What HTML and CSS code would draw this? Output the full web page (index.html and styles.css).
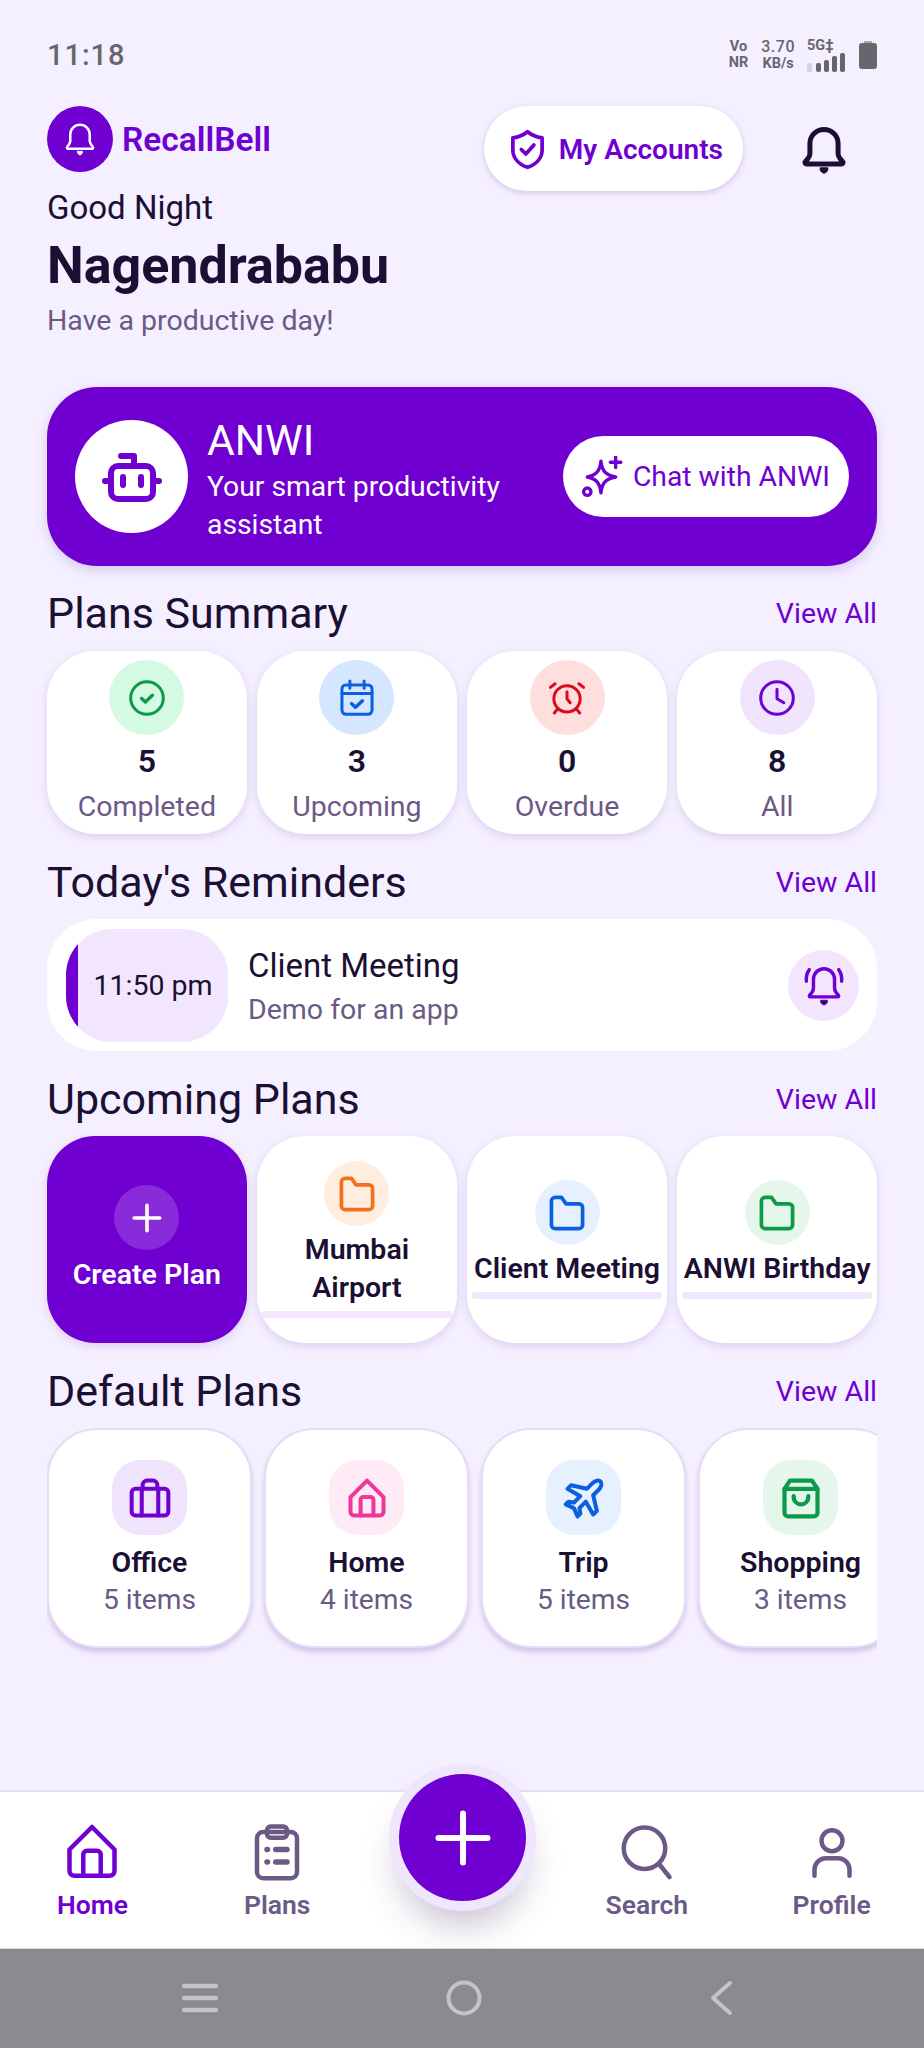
FILE: index.html
```html
<!DOCTYPE html>
<html lang="en">
<head>
    <meta charset="UTF-8">
    <meta name="viewport" content="width=device-width, initial-scale=1.0">
    <title>RecallBell</title>
    <link rel="stylesheet" href="styles.css">
</head>
<body>
    <svg class="sprites" width="0" height="0">
        <symbol id="i-folder" viewBox="0 0 24 24"><path d="M3.500 5.500a2 2 0 0 1 2-2h3.500l2.500 3.500h7a2 2 0 0 1 2 2v9.500a2 2 0 0 1-2 2h-13a2 2 0 0 1-2-2z"/></symbol>
        <symbol id="i-bell" viewBox="0 0 24 24"><path d="M12 2.500a6.500 6.500 0 0 0-6.500 6.500v4.500c0 1.500-.9 2.600-2 3.700-.5.500-.2 1.300.5 1.300h16c.7 0 1-.8.5-1.300-1.100-1.100-2-2.200-2-3.700V9A6.500 6.500 0 0 0 12 2.500z"/><path class="fill" d="M10.300 20.300h3.400c.2 1-.7 2-1.700 2.400-1-.4-1.900-1.400-1.700-2.400z"/></symbol>
    </svg>

    <div class="status">
        <span class="clock">11:18</span>
        <div class="status-right">
            <span class="tiny">Vo<br>NR</span>
            <span class="tiny speed"><b>3.70</b><br>KB/s</span>
            <div class="net">
                <span class="tiny">5G&#8225;</span>
                <div class="bars"><i class="bar-arrow"></i><i class="b1"></i><i class="b2"></i><i class="b3"></i><i class="b4"></i></div>
            </div>
            <div class="battery"><i class="battery-cap"></i><i class="battery-body"></i></div>
        </div>
    </div>

    <div class="main">
        <div class="topbar">
            <div class="brand">
                <span class="brand-logo"><svg class="ic" viewBox="0 0 24 24" width="36" height="36" stroke="#fff" stroke-width="1.700"><use href="#i-bell"/></svg></span>
                <span class="brand-name">RecallBell</span>
            </div>
            <div class="accounts">
                <svg class="ic" viewBox="0 0 24 24" width="45" height="45" stroke="#6f00d1" stroke-width="2"><path d="M12 2.500c2.200 1.800 4.700 2.900 7.800 3.300v6.400c0 4.400-3.200 7.700-7.800 9.300-4.600-1.600-7.800-4.900-7.800-9.300V5.800c3.100-.4 5.600-1.500 7.800-3.300z"/><path d="M8.700 12l2.400 2.400 4.300-4.800"/></svg>
                <span>My Accounts</span>
            </div>
            <svg class="ic top-bell" viewBox="0 0 24 24" width="52" height="52" stroke="#1b0f33" stroke-width="2.300"><use href="#i-bell"/></svg>
        </div>

        <p class="greet">Good Night</p>
        <h1 class="name">Nagendrababu</h1>
        <p class="tagline">Have a productive day!</p>

        <div class="hero">
            <span class="hero-avatar">
                <svg class="ic" viewBox="0 0 60 50" width="60" height="50" stroke="#6f00d1" stroke-width="6"><path d="M19 4h13v10"/><rect x="9" y="14" width="42" height="33" rx="7"/><path d="M3 29h6M51 29h6"/><path d="M21 25v8M39 25v8" stroke-width="6"/></svg>
            </span>
            <div class="hero-text">
                <div class="hero-title">ANWI</div>
                <div class="hero-sub">Your smart productivity assistant</div>
            </div>
            <div class="chat-btn">
                <svg class="ic" viewBox="0 0 40 40" width="42" height="42" stroke="#6f00d1" stroke-width="3.200"><path d="M20 5c1 9 4 13 14 15-10 2-13 6-14 15-1-9-4-13-13-15 9-2 12-6 13-15z" transform="translate(-1 0)"/><path d="M33 1v10M28 6h10"/><circle cx="6" cy="34" r="3.500"/></svg>
                <span>Chat with ANWI</span>
            </div>
        </div>

        <div class="section-head head-first"><h2>Plans Summary</h2><a>View All</a></div>
        <div class="summary-grid">
            <div class="card summary-card">
                <span class="round-icon green-bg"><svg class="ic" viewBox="0 0 24 24" width="38" height="38" stroke="#0a9a48" stroke-width="1.900"><circle cx="12" cy="12" r="10.300"/><path d="M8.600 12.300l2.400 2.200 4.400-4.200" stroke-width="2.200"/></svg></span>
                <div class="num">5</div>
                <div class="lbl">Completed</div>
            </div>
            <div class="card summary-card">
                <span class="round-icon blue-bg"><svg class="ic" viewBox="0 0 24 24" width="38" height="38" stroke="#0b5fe0" stroke-width="1.900"><rect x="2.500" y="3.800" width="19" height="18.500" rx="2.500"/><path d="M2.500 9.200h19M7.500 1.300v4.500M16.500 1.300v4.500"/><path d="M8.600 15.600l2.400 2.200 4.400-4" stroke-width="2.200"/></svg></span>
                <div class="num">3</div>
                <div class="lbl">Upcoming</div>
            </div>
            <div class="card summary-card">
                <span class="round-icon red-bg"><svg class="ic" viewBox="0 0 24 24" width="38" height="38" stroke="#dc0a1e" stroke-width="1.900"><circle cx="12" cy="12.500" r="8.300"/><path d="M12 8v4.500l2 2.500M1.500 5.300l3-2.300M22.500 5.300l-3-2.300M6 19l-2 2.500M18 19l2 2.500"/></svg></span>
                <div class="num">0</div>
                <div class="lbl">Overdue</div>
            </div>
            <div class="card summary-card">
                <span class="round-icon purple-bg"><svg class="ic" viewBox="0 0 24 24" width="38" height="38" stroke="#6f00d1" stroke-width="1.900"><circle cx="12" cy="12" r="10.300"/><path d="M12 6.500V12.500l4.300 2.500"/></svg></span>
                <div class="num">8</div>
                <div class="lbl">All</div>
            </div>
        </div>

        <div class="section-head"><h2>Today's Reminders</h2><a>View All</a></div>
        <div class="reminder">
            <div class="reminder-time">11:50 pm</div>
            <div class="reminder-text">
                <div class="reminder-title">Client Meeting</div>
                <div class="reminder-sub">Demo for an app</div>
            </div>
            <span class="reminder-bell"><svg class="ic" viewBox="0 0 24 24" width="46" height="46" stroke="#6f00d1" stroke-width="1.800"><path d="M12 3.500a5.500 5.500 0 0 0-5.500 5.500v4.500c0 1.500-.8 2.600-2 3.800-.3.400-.1.900.4.900h14.200c.5 0 .7-.5.400-.9-1.200-1.200-2-2.300-2-3.800V9A5.500 5.500 0 0 0 12 3.500z"/><path class="fill" d="M10.300 20h3.400c.2 1-.7 2-1.700 2.400-1-.4-1.900-1.400-1.700-2.400z"/><path d="M2.800 10c-.2-2.300.3-4.300 1.500-6M21.200 10c.2-2.300-.3-4.300-1.500-6"/></svg></span>
        </div>

        <div class="section-head"><h2>Upcoming Plans</h2><a>View All</a></div>
        <div class="upcoming-grid">
            <div class="card create-card">
                <span class="create-plus"><svg class="ic" viewBox="0 0 24 24" width="36" height="36" stroke="#fff" stroke-width="2.400"><path d="M12 3.500v17M3.500 12h17"/></svg></span>
                <div class="create-label">Create Plan</div>
            </div>
            <div class="card plan-card">
                <span class="plan-icon orange-bg"><svg class="ic" width="44" height="44" stroke="#f2711c" stroke-width="2"><use href="#i-folder"/></svg></span>
                <div class="plan-name">Mumbai<br>Airport</div>
                <div class="plan-bar"></div>
            </div>
            <div class="card plan-card">
                <span class="plan-icon sky-bg"><svg class="ic" width="44" height="44" stroke="#0b5fe0" stroke-width="2"><use href="#i-folder"/></svg></span>
                <div class="plan-name">Client Meeting</div>
                <div class="plan-bar"></div>
            </div>
            <div class="card plan-card">
                <span class="plan-icon mint-bg"><svg class="ic" width="44" height="44" stroke="#0a9a48" stroke-width="2"><use href="#i-folder"/></svg></span>
                <div class="plan-name">ANWI Birthday</div>
                <div class="plan-bar"></div>
            </div>
        </div>

        <div class="section-head"><h2>Default Plans</h2><a>View All</a></div>
        <div class="default-row">
            <div class="default-card">
                <span class="square-icon purple-bg"><svg class="ic" viewBox="0 0 24 24" width="44" height="44" stroke="#6f00d1" stroke-width="2.200"><rect x="2" y="7" width="20" height="14.500" rx="2"/><path d="M7.500 21.500V7M16.500 21.500V7M8 7V5a2.500 2.500 0 0 1 2.500-2.500h3A2.500 2.500 0 0 1 16 5v2"/></svg></span>
                <div class="default-name">Office</div>
                <div class="default-sub">5 items</div>
            </div>
            <div class="default-card">
                <span class="square-icon pink-bg"><svg class="ic" viewBox="0 0 24 24" width="44" height="44" stroke="#f0359b" stroke-width="2.200"><path d="M3 11.500L12 2.500l9 9v8a2 2 0 0 1-2 2H5a2 2 0 0 1-2-2z"/><path d="M8.500 21.500V13a1.500 1.500 0 0 1 1.500-1.500h4a1.500 1.500 0 0 1 1.500 1.500v8.500"/></svg></span>
                <div class="default-name">Home</div>
                <div class="default-sub">4 items</div>
            </div>
            <div class="default-card">
                <span class="square-icon sky-bg"><svg class="ic" viewBox="0 0 24 24" width="44" height="44" stroke="#0b5fe0" stroke-width="2.200"><path d="M21 3c-1-1-3-.5-4.500 1L13.500 7 5 5 3 7l7 4-3.500 3.500-3-.5-1.500 1.500 4.500 2 2 4.500L10 20.500l-.5-3L13 14l4 7 2-2-2-8.500 3-3c1.500-1.500 2-3.500 1-4.500z"/></svg></span>
                <div class="default-name">Trip</div>
                <div class="default-sub">5 items</div>
            </div>
            <div class="default-card">
                <span class="square-icon mint-bg"><svg class="ic" viewBox="0 0 24 24" width="44" height="44" stroke="#0a9a48" stroke-width="2.300"><path d="M3 7l3-4.500h12L21 7v13a2 2 0 0 1-2 2H5a2 2 0 0 1-2-2z"/><path d="M3 7h18M8 11c0 6 8 6 8 0"/></svg></span>
                <div class="default-name">Shopping</div>
                <div class="default-sub">3 items</div>
            </div>
        </div>
    </div>

    <div class="tabbar">
        <div class="tab tab-active">
            <svg class="ic" viewBox="0 0 24 24" width="60" height="60" stroke="#6f00d1" stroke-width="1.800"><path d="M3 11L12 2l9 9v8.500a2 2 0 0 1-2 2H5a2 2 0 0 1-2-2z"/><path d="M8.500 21.500V13a1.500 1.500 0 0 1 1.500-1.500h4a1.500 1.500 0 0 1 1.500 1.500v8.500"/></svg>
            <span>Home</span>
        </div>
        <div class="tab">
            <svg class="ic" viewBox="0 0 24 24" width="60" height="60" stroke="#6b5a85" stroke-width="1.800"><rect x="4" y="4" width="16" height="18.500" rx="2.500"/><rect x="8" y="1.800" width="8" height="4.500" rx="1.500"/><path d="M8 11h.2M8 16h.2M11.500 11H16M11.500 16H16" stroke-width="2.200"/></svg>
            <span>Plans</span>
        </div>
        <div class="tab"></div>
        <div class="tab">
            <svg class="ic" viewBox="0 0 24 24" width="60" height="60" stroke="#6b5a85" stroke-width="1.800"><circle cx="11" cy="10.500" r="8.300"/><path d="M17 17l4 5"/></svg>
            <span>Search</span>
        </div>
        <div class="tab">
            <svg class="ic" viewBox="0 0 24 24" width="60" height="60" stroke="#6b5a85" stroke-width="1.800"><circle cx="12" cy="7.500" r="4.200"/><path d="M5 21.500V19a4.500 4.500 0 0 1 4.500-4.500h5A4.500 4.500 0 0 1 19 19v2.500"/></svg>
            <span>Profile</span>
        </div>
        <div class="fab">
            <svg class="ic" viewBox="0 0 24 24" width="62" height="62" stroke="#fff" stroke-width="2.300"><path d="M12 2.500v19M2.500 12h19"/></svg>
        </div>
    </div>

    <div class="sysnav">
        <svg class="ic" viewBox="0 0 36 30" width="36" height="30" stroke="#c3c4c6" stroke-width="4.500"><path d="M2 3h32M2 15h32M2 27h32"/></svg>
        <svg class="ic" viewBox="0 0 36 36" width="36" height="36" stroke="#c3c4c6" stroke-width="4"><circle cx="18" cy="18" r="15.500"/></svg>
        <svg class="ic" viewBox="0 0 24 36" width="24" height="36" stroke="#c3c4c6" stroke-width="4"><path d="M21 3L4 18l17 15"/></svg>
    </div>
</body>
</html>
```

FILE: styles.css
```css
html, body {
    margin: 0;
    height: 100%;
}

body {
    width: 924px;
    height: 2048px;
    display: flex;
    flex-direction: column;
    overflow: hidden;
    background-color: #f5f0ff;
    color: #1b0f33;
    font-family: Roboto, "Liberation Sans", sans-serif;
}

p, h1, h2 {
    margin: 0;
    font-weight: 400;
}

.sprites {
    position: absolute;
}

.ic {
    fill: none;
    stroke-linecap: round;
    stroke-linejoin: round;
    flex-shrink: 0;
}

.fill {
    fill: currentColor;
    stroke-width: 0.6;
}

/* status bar */
.status {
    height: 106px;
    box-sizing: border-box;
    padding: 4px 47px 0;
    display: flex;
    align-items: center;
    justify-content: space-between;
}

.clock {
    font-size: 29px;
    font-weight: 500;
    letter-spacing: 1px;
    color: #68656c;
}

.status-right {
    display: flex;
    align-items: center;
    color: #68656c;
}

.tiny {
    display: block;
    font-size: 14.500px;
    line-height: 16px;
    font-weight: 700;
    text-align: center;
}

.speed {
    margin-left: 13px;
}

.speed b {
    font-size: 16px;
    font-weight: 500;
    letter-spacing: 0.5px;
}

.net {
    margin-left: 12px;
    width: 43px;
}

.net .tiny {
    text-align: left;
}

.bars {
    display: flex;
    align-items: flex-end;
    gap: 3px;
    height: 18px;
}

.bars i {
    display: block;
    width: 5px;
    background-color: #68656c;
    border-radius: 2px;
}

.bars .bar-arrow {
    width: 5px;
    height: 9px;
    margin-right: 1px;
    background-color: #d5d2da;
}

.bars .b1 { height: 9px; }
.bars .b2 { height: 12px; }
.bars .b3 { height: 16px; }
.bars .b4 { height: 19px; }

.battery {
    margin-left: 9px;
    width: 18px;
    display: flex;
    flex-direction: column;
    align-items: center;
}

.battery-cap {
    width: 8px;
    height: 2px;
    background-color: #a8a5ad;
}

.battery-body {
    width: 18px;
    height: 26px;
    background-color: #68656c;
    border-radius: 3px;
}

/* header */
.main {
    flex: 1;
    padding: 0 47px;
    min-height: 0;
}

.topbar {
    height: 85px;
    display: flex;
    align-items: flex-start;
}

.brand {
    display: flex;
    align-items: center;
    gap: 10px;
}

.brand-logo {
    width: 66px;
    height: 66px;
    border-radius: 50%;
    background-color: #6f00d1;
    color: #fff;
    display: flex;
    align-items: center;
    justify-content: center;
}

.brand-name {
    font-size: 33.500px;
    font-weight: 600;
    color: #6f00d1;
    margin-left: -1px;
}

.accounts {
    margin-left: auto;
    height: 85px;
    box-sizing: border-box;
    padding: 2px 20px 0 21px;
    display: flex;
    align-items: center;
    gap: 9px;
    background-color: #fff;
    border-radius: 43px;
    font-size: 28px;
    font-weight: 600;
    color: #6f00d1;
    box-shadow: 0 2px 6px rgba(90, 40, 160, 0.22);
}

.top-bell {
    margin: 18px 27px 0 55px;
    color: #1b0f33;
}

.greet {
    font-size: 33px;
    line-height: 34px;
}

.name {
    margin-top: 12px;
    font-size: 52px;
    line-height: 58px;
    font-weight: 700;
}

.tagline {
    margin-top: 8px;
    font-size: 28.500px;
    line-height: 36px;
    color: #6b5a85;
}

/* ANWI banner */
.hero {
    margin-top: 48px;
    height: 179px;
    box-sizing: border-box;
    padding: 0 28px;
    display: flex;
    align-items: center;
    background-color: #6f00d1;
    border-radius: 50px;
    color: #fff;
    box-shadow: 0 4px 12px rgba(90, 40, 160, 0.2);
}

.hero-avatar {
    width: 113px;
    height: 113px;
    flex-shrink: 0;
    border-radius: 50%;
    background-color: #fff;
    display: flex;
    align-items: center;
    justify-content: center;
}

.hero-text {
    margin-left: 19px;
    width: 320px;
    padding-top: 8px;
}

.hero-title {
    font-size: 42.500px;
    line-height: 46px;
}

.hero-sub {
    margin-top: 4px;
    font-size: 28.300px;
    line-height: 38px;
}

.chat-btn {
    margin-left: auto;
    height: 81px;
    box-sizing: border-box;
    padding: 0 19px 0 18px;
    display: flex;
    align-items: center;
    gap: 10px;
    background-color: #fff;
    border-radius: 41px;
    font-size: 28.300px;
    color: #6f00d1;
    white-space: nowrap;
}

/* section headings */
.section-head {
    margin-top: 23px;
    margin-bottom: 12px;
    height: 50px;
    display: flex;
    align-items: center;
    justify-content: space-between;
}

.head-first {
    margin-top: 22px;
    margin-bottom: 13px;
}

.section-head h2 {
    font-size: 43px;
    line-height: 50px;
}

.section-head a {
    font-size: 28.500px;
    color: #6f00d1;
}

/* shared cards */
.card {
    background-color: #fff;
    border-radius: 48px;
    box-shadow: 0 3px 10px rgba(90, 40, 160, 0.16);
}

.round-icon {
    width: 75px;
    height: 75px;
    border-radius: 50%;
    display: flex;
    align-items: center;
    justify-content: center;
}

.green-bg { background-color: #d5fae3; }
.blue-bg { background-color: #d5e7ff; }
.red-bg { background-color: #ffdfdd; }
.purple-bg { background-color: #efe4fc; }
.orange-bg { background-color: #ffeddf; }
.sky-bg { background-color: #e6f0ff; }
.mint-bg { background-color: #e5f6ea; }
.pink-bg { background-color: #ffebf5; }

/* plans summary */
.summary-grid, .upcoming-grid {
    display: grid;
    grid-template-columns: repeat(4, 1fr);
    gap: 10.500px;
}

.summary-card {
    height: 183px;
    box-sizing: border-box;
    padding-top: 9px;
    display: flex;
    flex-direction: column;
    align-items: center;
}

.num {
    margin-top: 5px;
    font-size: 32px;
    line-height: 42px;
    font-weight: 600;
}

.lbl {
    margin-top: 6px;
    font-size: 28.500px;
    line-height: 38px;
    color: #6b5a85;
}

/* reminder */
.reminder {
    height: 132px;
    box-sizing: border-box;
    padding: 0 18px 0 19px;
    display: flex;
    align-items: center;
    background-color: #fff;
    border-radius: 50px;
}

.reminder-time {
    width: 162px;
    height: 113px;
    box-sizing: border-box;
    padding-left: 12px;
    display: flex;
    align-items: center;
    justify-content: center;
    background: linear-gradient(to right, #6f00d1 12px, #f1e6fd 12px);
    border-radius: 46px;
    font-size: 28.500px;
    white-space: nowrap;
}

.reminder-text {
    flex: 1;
    margin-left: 20px;
    padding-top: 6px;
}

.reminder-title {
    font-size: 33px;
    line-height: 44px;
}

.reminder-sub {
    font-size: 28.500px;
    line-height: 44px;
    color: #6b5a85;
}

.reminder-bell {
    width: 71px;
    height: 71px;
    border-radius: 50%;
    background-color: #f1e6fd;
    display: flex;
    align-items: center;
    justify-content: center;
}

/* upcoming plans */
.upcoming-grid .card {
    height: 207px;
}

.create-card {
    background-color: #6f00d1;
    display: flex;
    flex-direction: column;
    align-items: center;
    justify-content: center;
    gap: 6px;
}

.create-plus {
    width: 65px;
    height: 65px;
    border-radius: 50%;
    background-color: #8a2bdb;
    display: flex;
    align-items: center;
    justify-content: center;
}

.create-label {
    font-size: 28.500px;
    line-height: 38px;
    font-weight: 600;
    color: #fff;
    white-space: nowrap;
}

.plan-card {
    display: flex;
    flex-direction: column;
    align-items: center;
    justify-content: center;
}

.plan-icon {
    width: 65px;
    height: 65px;
    border-radius: 50%;
    display: flex;
    align-items: center;
    justify-content: center;
}

.plan-name {
    margin-top: 5px;
    font-size: 28.500px;
    line-height: 38px;
    font-weight: 600;
    text-align: center;
    white-space: nowrap;
}

.plan-bar {
    margin-top: 4px;
    width: 190px;
    height: 7px;
    border-radius: 3px;
    background-color: #f1e6fd;
}

/* default plans */
.default-row {
    display: flex;
    gap: 12px;
    overflow: hidden;
    padding: 0 0 14px 0;
}

.default-card {
    flex: none;
    width: 205px;
    height: 220px;
    box-sizing: border-box;
    padding-top: 30px;
    display: flex;
    flex-direction: column;
    align-items: center;
    background-color: #fff;
    border: 2px solid #e6dcf5;
    border-radius: 50px;
    box-shadow: 0 4px 5px rgba(90, 40, 160, 0.22);
}

.square-icon {
    width: 75px;
    height: 75px;
    border-radius: 28px;
    display: flex;
    align-items: center;
    justify-content: center;
}

.default-name {
    margin-top: 9px;
    font-size: 28.500px;
    line-height: 38px;
    font-weight: 600;
}

.default-sub {
    font-size: 28.200px;
    line-height: 36px;
    color: #6b5a85;
}

/* bottom tabs */
.tabbar {
    position: relative;
    height: 158px;
    box-sizing: border-box;
    padding-top: 30px;
    display: grid;
    grid-template-columns: repeat(5, 1fr);
    background-color: #fff;
    border-top: 2px solid #e8e0f5;
}

.tab {
    display: flex;
    flex-direction: column;
    align-items: center;
    gap: 8px;
    font-size: 26.500px;
    line-height: 30px;
    font-weight: 600;
    color: #6b5a85;
}

.tab-active {
    color: #6f00d1;
}

.fab {
    position: absolute;
    left: 399px;
    top: -18px;
    width: 127px;
    height: 127px;
    border-radius: 50%;
    background-color: #6f00d1;
    display: flex;
    align-items: center;
    justify-content: center;
    box-shadow: 0 0 0 10px #efe5fd, 0 24px 36px rgba(60, 40, 90, 0.28);
}

.sysnav {
    height: 100px;
    position: relative;
    box-sizing: border-box;
    padding: 0 191px 2px 182px;
    display: flex;
    align-items: center;
    justify-content: space-between;
    background-color: #8a8b8f;
    border-top: 1px solid #d8d8da;
}
```
